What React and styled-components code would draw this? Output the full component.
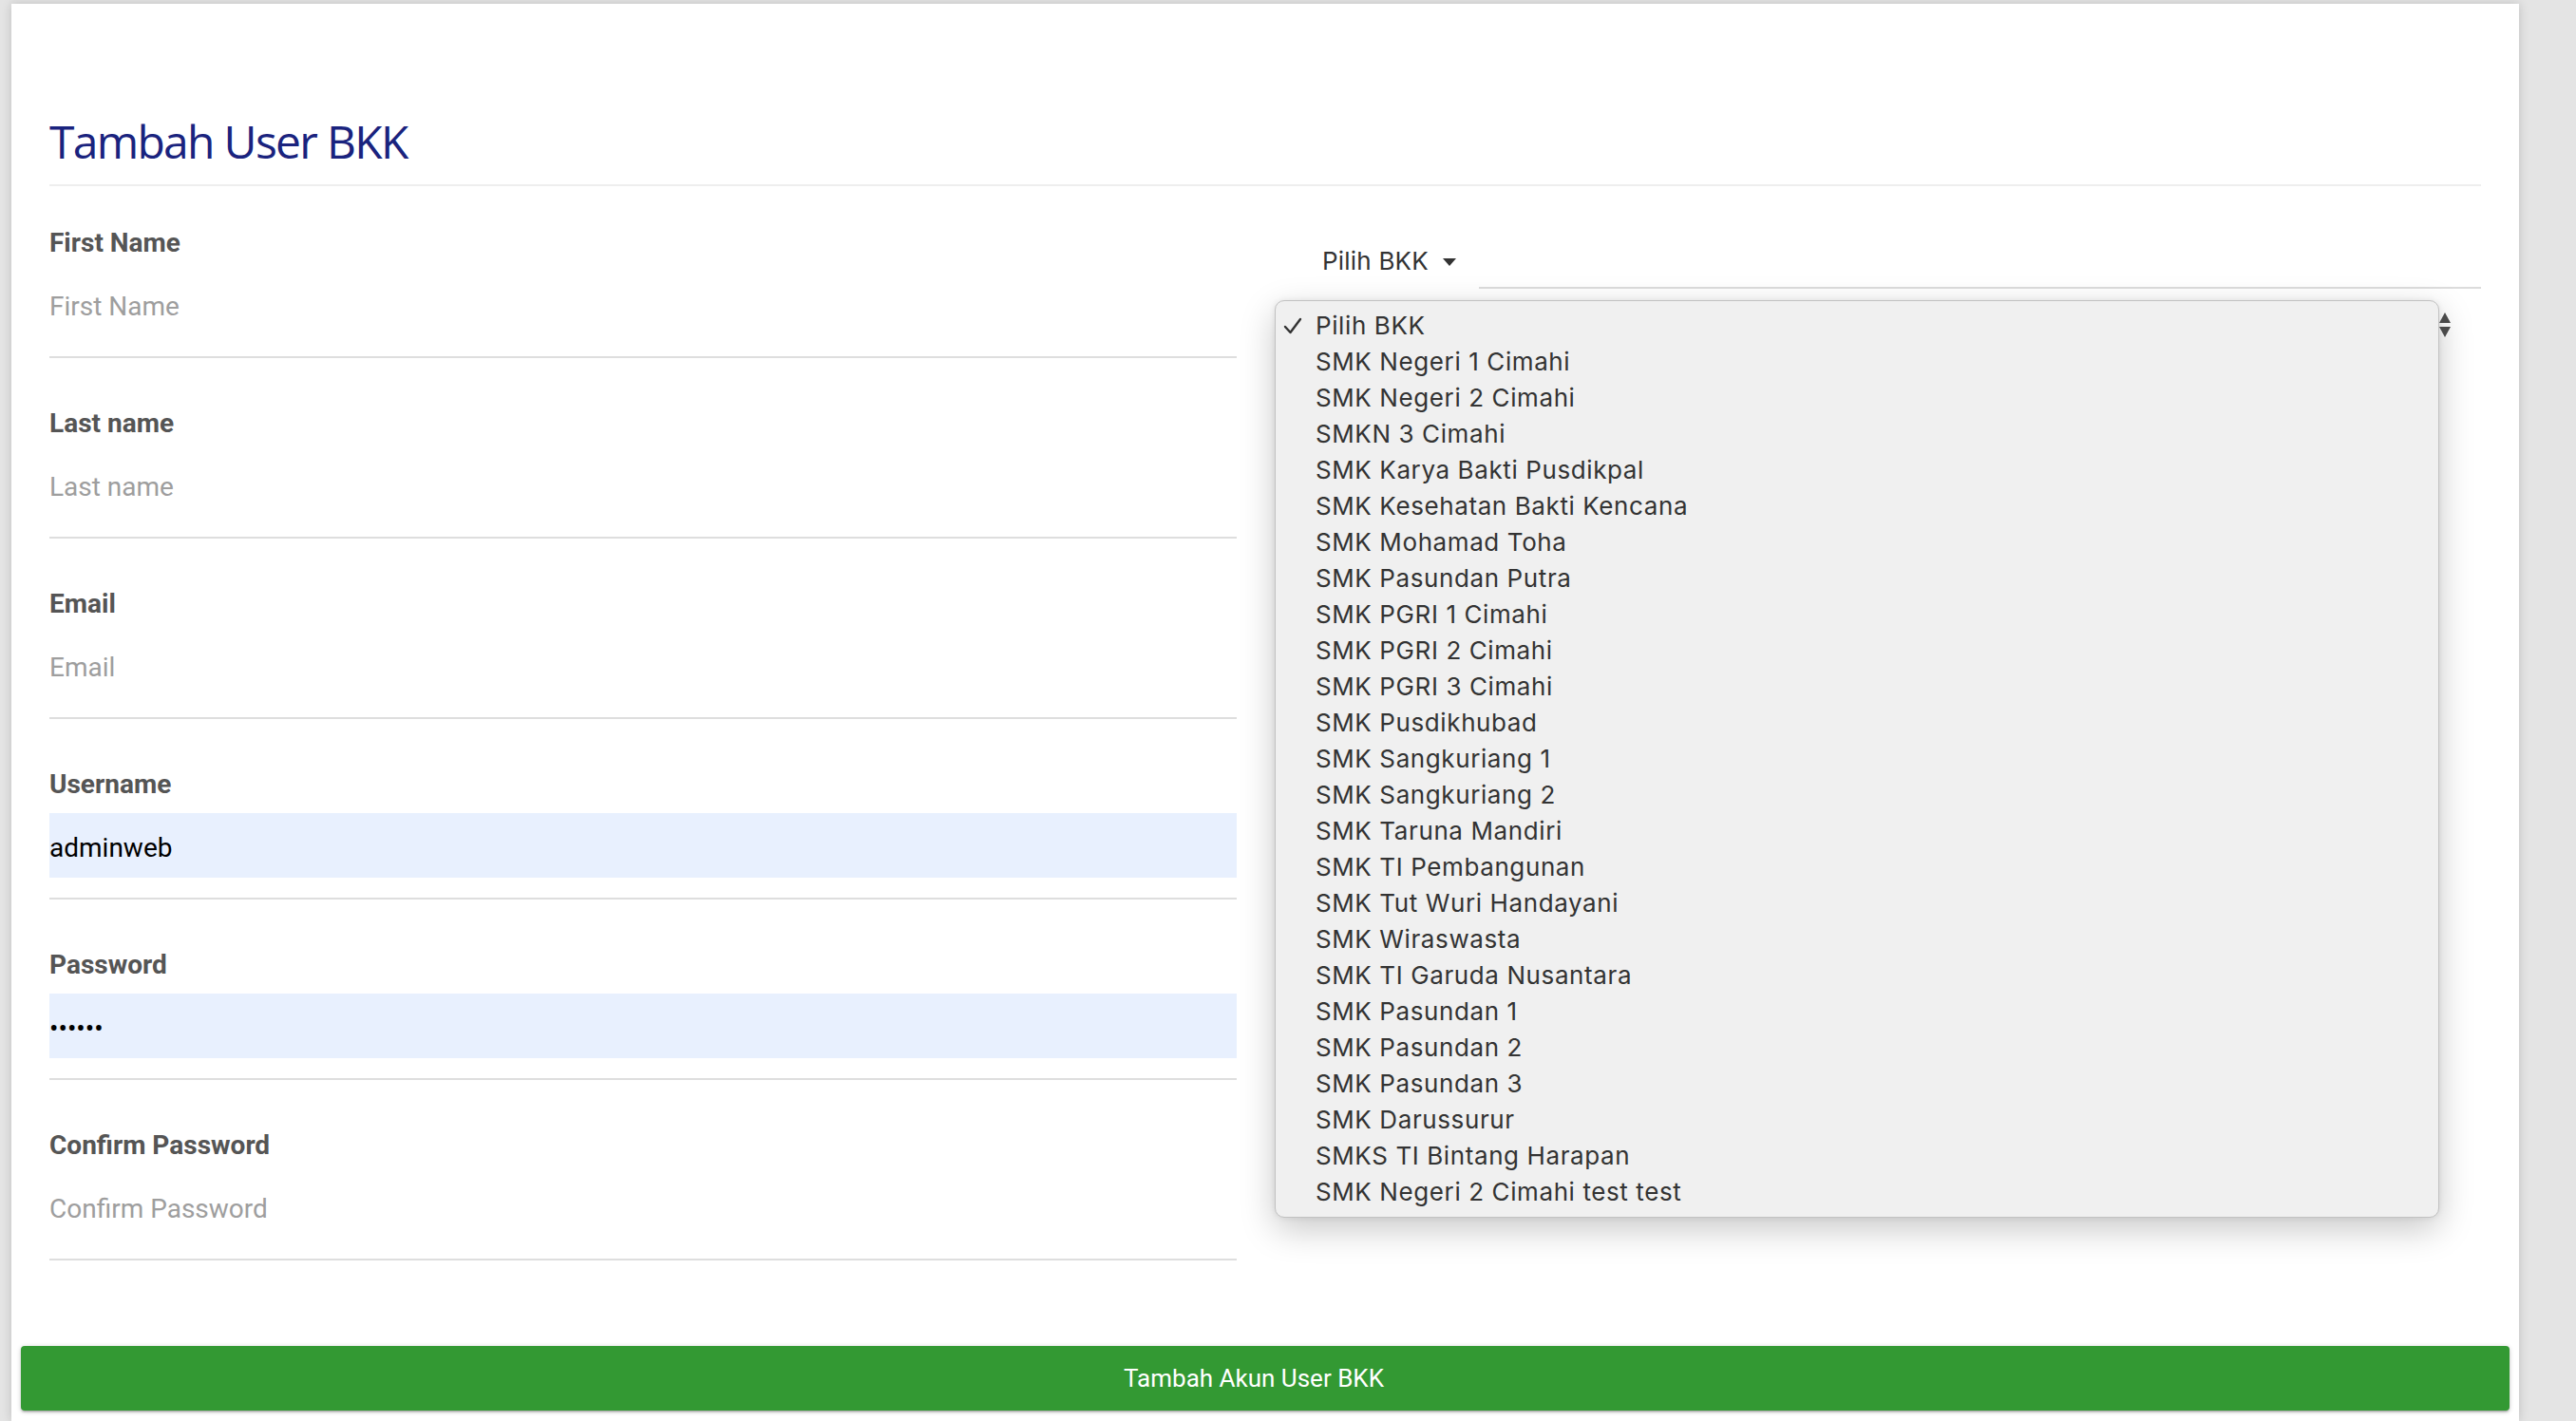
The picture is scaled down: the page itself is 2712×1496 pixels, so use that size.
import React from "react";
import styled, { createGlobalStyle } from "styled-components";

const Global = createGlobalStyle`
  html, body { margin: 0; padding: 0; }
  body {
    background: #e4e4e4;
    font-family: Roboto, "Liberation Sans", sans-serif;
    width: 2712px;
    min-height: 1496px;
    overflow: hidden;
  }
`;

const Card = styled.div`
  margin: 4px 0 0 12px;
  width: 2640px;
  min-height: 1492px;
  background: #fff;
  box-shadow: 0 0 10px rgba(0, 0, 0, 0.16);
  padding: 117px 10px 0;
  box-sizing: border-box;
  display: flex;
  flex-direction: column;
`;

const Inner = styled.div`
  padding: 0 30px;
`;

const Title = styled.h2`
  margin: 0;
  font-family: "Open Sans", "Noto Sans", sans-serif;
  font-weight: 500;
  font-size: 48px;
  line-height: 56px;
  letter-spacing: -1.7px;
  color: #1a237e;
  padding-bottom: 17px;
  border-bottom: 2px solid #eeeeee;
`;

const Grid = styled.div`
  display: grid;
  grid-template-columns: 1250px 1250px;
  column-gap: 60px;
  margin-top: 44px;
`;

const Column = styled.div`
  display: flex;
  flex-direction: column;
  position: relative;
`;

const FieldGroup = styled.div`
  display: flex;
  flex-direction: column;
  padding-bottom: 21px;
  border-bottom: 2px solid #dedede;
  margin-bottom: 53px;
`;

const Label = styled.label`
  font-family: Roboto, sans-serif;
  font-weight: 700;
  font-size: 28px;
  line-height: 32px;
  color: #555;
  margin-bottom: 14px;
`;

const Input = styled.input`
  height: 68px;
  box-sizing: border-box;
  border: none;
  outline: none;
  padding: 4px 0 0;
  margin: 0;
  font-family: Roboto, sans-serif;
  font-size: 28px;
  color: #000;
  background: ${(p) => (p.$filled ? "#e8f0fe" : "transparent")};
  &::placeholder { color: #9e9e9e; opacity: 1; }
`;

const SelectRow = styled.div`
  display: flex;
  align-items: stretch;
  padding-top: 16px;
`;

const SelectBox = styled.div`
  display: flex;
  align-items: center;
  margin-left: 30px;
  font-family: Inter, "Liberation Sans", sans-serif;
  font-size: 26px;
  letter-spacing: 0.2px;
  line-height: 38px;
  color: #333;
  padding-bottom: 10px;
`;

const Caret = styled.svg`
  margin-left: 14px;
  margin-top: 2px;
`;

const SelectLine = styled.div`
  flex: 1;
  margin-left: 23px;
  border-bottom: 2px solid #dcdcdc;
`;

const Popup = styled.ul`
  position: absolute;
  left: -20px;
  top: 76px;
  width: 1226px;
  box-sizing: border-box;
  margin: 0;
  padding: 7px 0;
  list-style: none;
  background: #f0f0f0;
  border: 1px solid #c2c2c2;
  border-radius: 10px;
  box-shadow: 0 12px 36px rgba(0, 0, 0, 0.22), 0 0 6px rgba(0, 0, 0, 0.08);
  z-index: 5;
`;

const Item = styled.li`
  position: relative;
  padding-left: 42px;
  font-family: Inter, "Liberation Sans", sans-serif;
  font-size: 26px;
  letter-spacing: 0.6px;
  line-height: 38px;
  color: #333;
  white-space: nowrap;
`;

const Check = styled.svg`
  position: absolute;
  left: 8px;
  top: 10px;
`;

const Stepper = styled.svg`
  position: absolute;
  left: 1206px;
  top: 89px;
  z-index: 6;
`;

const SubmitButton = styled.button`
  margin-top: 37px;
  height: 68px;
  width: 100%;
  border: none;
  border-radius: 4px;
  padding: 0 24px 0 0;
  background: #339933;
  color: #fff;
  font-family: Roboto, sans-serif;
  font-size: 26px;
  cursor: pointer;
  box-shadow: 0 2px 2px 0 rgba(0, 0, 0, 0.14), 0 3px 1px -2px rgba(0, 0, 0, 0.12),
    0 1px 5px 0 rgba(0, 0, 0, 0.2);
`;

const fields = [
  { label: "First Name", placeholder: "First Name" },
  { label: "Last name", placeholder: "Last name" },
  { label: "Email", placeholder: "Email" },
  { label: "Username", value: "adminweb", filled: true },
  { label: "Password", value: "secret", filled: true, type: "password" },
  { label: "Confirm Password", placeholder: "Confirm Password", type: "password" },
];

const options = [
  "Pilih BKK",
  "SMK Negeri 1 Cimahi",
  "SMK Negeri 2 Cimahi",
  "SMKN 3 Cimahi",
  "SMK Karya Bakti Pusdikpal",
  "SMK Kesehatan Bakti Kencana",
  "SMK Mohamad Toha",
  "SMK Pasundan Putra",
  "SMK PGRI 1 Cimahi",
  "SMK PGRI 2 Cimahi",
  "SMK PGRI 3 Cimahi",
  "SMK Pusdikhubad",
  "SMK Sangkuriang 1",
  "SMK Sangkuriang 2",
  "SMK Taruna Mandiri",
  "SMK TI Pembangunan",
  "SMK Tut Wuri Handayani",
  "SMK Wiraswasta",
  "SMK TI Garuda Nusantara",
  "SMK Pasundan 1",
  "SMK Pasundan 2",
  "SMK Pasundan 3",
  "SMK Darussurur",
  "SMKS TI Bintang Harapan",
  "SMK Negeri 2 Cimahi test test",
];

export default function App() {
  return (
    <>
      <Global />
      <Card>
        <Inner>
          <Title>Tambah User BKK</Title>
          <Grid>
            <Column>
              {fields.map((f) => (
                <FieldGroup key={f.label}>
                  <Label>{f.label}</Label>
                  <Input
                    type={f.type || "text"}
                    placeholder={f.placeholder}
                    defaultValue={f.value}
                    $filled={f.filled}
                  />
                </FieldGroup>
              ))}
            </Column>
            <Column>
              <SelectRow>
                <SelectBox>
                  Pilih BKK
                  <Caret width="16" height="8" viewBox="0 0 16 8">
                    <path d="M1 0 L15 0 L8 8 Z" fill="#333" />
                  </Caret>
                </SelectBox>
                <SelectLine />
              </SelectRow>
              <Popup>
                {options.map((o, i) => (
                  <Item key={o}>
                    {i === 0 && (
                      <Check width="20" height="18" viewBox="0 0 20 18">
                        <path
                          d="M2 10 L7.5 16 L18 2"
                          fill="none"
                          stroke="#333"
                          strokeWidth="2.4"
                          strokeLinecap="round"
                          strokeLinejoin="round"
                        />
                      </Check>
                    )}
                    {o}
                  </Item>
                ))}
              </Popup>
              <Stepper width="12" height="27" viewBox="0 0 12 27">
                <path d="M6 0 L12 11 L0 11 Z" fill="#4a4a4a" />
                <path d="M0 15 L12 15 L6 26 Z" fill="#4a4a4a" />
              </Stepper>
            </Column>
          </Grid>
        </Inner>
        <SubmitButton>Tambah Akun User BKK</SubmitButton>
      </Card>
    </>
  );
}
